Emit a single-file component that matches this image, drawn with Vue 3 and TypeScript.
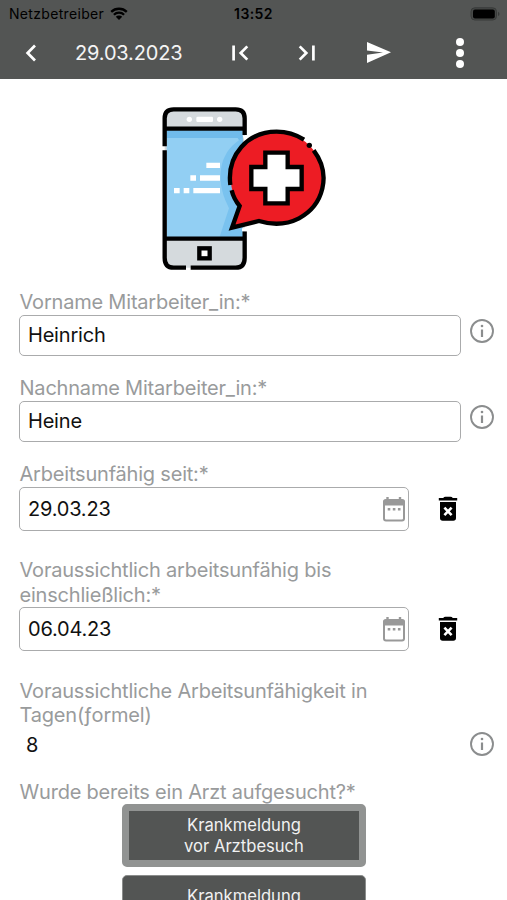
<script setup lang="ts">
import { ref } from 'vue'

interface Field {
  id: string
  label: string[]
  value: string
  kind: 'text' | 'date' | 'formula'
}

const fields = ref<Field[]>([
  { id: 'vorname', label: ['Vorname Mitarbeiter_in:*'], value: 'Heinrich', kind: 'text' },
  { id: 'nachname', label: ['Nachname Mitarbeiter_in:*'], value: 'Heine', kind: 'text' },
  { id: 'seit', label: ['Arbeitsunfähig seit:*'], value: '29.03.23', kind: 'date' },
  { id: 'bis', label: ['Voraussichtlich arbeitsunfähig bis', 'einschließlich:*'], value: '06.04.23', kind: 'date' },
  { id: 'tage', label: ['Voraussichtliche Arbeitsunfähigkeit in', 'Tagen(ƒormel)'], value: '8', kind: 'formula' },
])

const options = [['Krankmeldung', 'vor Arztbesuch'], ['Krankmeldung']]
const selected = ref(0)
</script>

<template>
  <div class="screen">
    <header class="header">
      <div class="status">
        <div class="carrier">
          <span>Netzbetreiber</span>
          <svg class="wifi" viewBox="0 0 18 14">
            <path d="M1.2 4.9a11.2 11.2 0 0 1 15.6 0M3.9 7.8a7.3 7.3 0 0 1 10.2 0" fill="none" stroke="#000" stroke-width="2.3" />
            <path d="M5.8 9.8a4.6 4.6 0 0 1 6.4 0L9 13z" />
          </svg>
        </div>
        <span class="clock">13:52</span>
        <svg class="battery" viewBox="0 0 30 14">
          <rect x="1" y=".8" width="25.5" height="12.2" rx="3.8" fill="#464847" stroke="#383a39" />
          <rect x="3" y="2.6" width="21.8" height="8.8" rx="2" />
          <path d="M28 4.8q1.5.8 1.5 2.1T28 9z" fill="#383a39" />
        </svg>
      </div>
      <nav class="toolbar">
        <button class="tool back" aria-label="Zurück">
          <svg viewBox="0 0 12 18"><path d="M10 1.5 2.6 9l7.4 7.5" /></svg>
        </button>
        <span class="today">29.03.2023</span>
        <button class="tool first" aria-label="Erster">
          <svg viewBox="0 0 17 16"><path d="M1.6.5v15M15.3 1.4 8.7 8l6.6 6.6" /></svg>
        </button>
        <button class="tool last" aria-label="Letzter">
          <svg viewBox="0 0 17 16"><path d="M15.4.5v15M1.7 1.4 8.3 8l-6.6 6.6" /></svg>
        </button>
        <button class="tool send" aria-label="Senden">
          <svg viewBox="0 0 24 21"><path d="M0 0 24 10.3 0 21v-8.2l16-2.3L0 8.4z" /></svg>
        </button>
        <button class="tool more" aria-label="Mehr">
          <svg viewBox="0 0 8 30"><circle cx="4" cy="4" r="4" /><circle cx="4" cy="15" r="4" /><circle cx="4" cy="26" r="4" /></svg>
        </button>
      </nav>
    </header>

    <main class="content">
      <svg class="hero" viewBox="0 0 570 540">
        <rect x="44" y="34" width="240" height="475" rx="26" fill="#d5dadd" />
        <rect x="50" y="92" width="228" height="330" fill="#92cff3" />
        <path d="M50 98h228v45l-15-23H50z" fill="#70bbeb" />
        <path d="M278 120C215 155 195 225 226 307L237 331 209 416h69z" fill="#79c2ef" />
        <g fill="#fff">
          <circle cx="118" cy="64" r="8" />
          <rect x="139" y="56" width="50" height="16" rx="4" />
          <circle cx="209" cy="64" r="8" />
          <path d="M169 194h41v16h-41zM121 232h17v16h-17zM150 232h60v16h-60zM72 270h17v16H72zM101 270h17v16h-17zM130 270h80v16h-80z" />
        </g>
        <g fill="none" stroke="#000" stroke-width="13">
          <path d="M44 145V61q0-27 27-27h186q27 0 27 27v50M44 157v322q0 30 27 30h37M122 509h135q27 0 27-30v-79M44 92h240M44 422h240" />
          <rect x="148" y="451" width="31" height="30" fill="#fff" />
        </g>
        <path d="M278 112 292 116 286 135zM276 391h15v9h-15z" fill="#fff" />
        <circle cx="380" cy="239" r="138" fill="#ed1c24" />
        <path d="M245 275q8 28 23 49l-24 66 84-20 50-70-60-70z" fill="#ed1c24" />
        <g fill="none" stroke="#000" stroke-width="13">
          <path d="M241 261C230 170 294 101 380 101q44 0 82 24M491 157C546 230 520 322 447 361Q392 389 327 369L246 389 269 324Q251 303 245 277" />
          <path d="M346 164h67v43h42v66h-42v43h-67v-43h-42v-66h42z" fill="#fff" />
        </g>
        <circle cx="478" cy="142" r="8" />
      </svg>

      <section v-for="field in fields" :key="field.id" class="field" :class="field.kind">
        <label class="label" :for="field.id">
          <span v-for="line in field.label" :key="line">{{ line }}</span>
        </label>
        <div class="row">
          <div class="control">
            <span :id="field.id" class="value">{{ field.value }}</span>
            <svg v-if="field.kind === 'date'" class="calendar" viewBox="0 0 24 26">
              <path d="M5.5 1v5M18 1v5" stroke="#999" stroke-width="2.4" />
              <rect x="2" y="4.5" width="20" height="20" rx="2" fill="#fff" stroke="#999" stroke-width="2" />
              <path d="M1 9.5V6q0-3 3-3h16q3 0 3 3v3.5z" fill="#999" />
              <path d="M5.7 12h2.6v2.4H5.7zM10.8 12h2.6v2.4h-2.6zM15.9 12h2.6v2.4h-2.6z" fill="#999" />
            </svg>
          </div>
          <button v-if="field.kind === 'date'" class="trash" aria-label="Löschen">
            <svg viewBox="0 0 20 26">
              <path d="M.8 2h4.4Q6 .8 7.5.8h5q1.5 0 2.3 1.200h4.400v2.600H.8zM2 6h16v16q0 2.700-2.700 2.700H4.700Q2 24.700 2 22z" />
              <path d="m6.400 11.600 7.200 7.600M13.600 11.600l-7.200 7.600" stroke="#fff" stroke-width="2.6" />
            </svg>
          </button>
          <button v-else class="info" aria-label="Info">
            <svg viewBox="0 0 26 26">
              <circle cx="13" cy="13" r="11" fill="none" stroke="#8b8d8e" stroke-width="1.9" />
              <path d="M13 11.500v7.500" stroke="#8b8d8e" stroke-width="2.2" />
              <circle cx="13" cy="8" r="1.3" fill="#8b8d8e" />
            </svg>
          </button>
        </div>
      </section>

      <section class="choice">
        <span class="label">Wurde bereits ein Arzt aufgesucht?*</span>
        <div class="options">
          <button
            v-for="(option, i) in options"
            :key="i"
            class="option"
            :class="{ active: selected === i }"
            @click="selected = i"
          >
            <span v-for="line in option" :key="line">{{ line }}</span>
          </button>
        </div>
      </section>
    </main>
  </div>
</template>

<style>
body {
  background: #fff;
}
</style>

<style scoped>
.screen {
  width: 507px;
  height: 900px;
  overflow: hidden;
  box-sizing: border-box;
  font-family: Inter, "Liberation Sans", sans-serif;
  color: #111;
  background: #fff;
}
.screen svg {
  display: block;
}
button {
  border: 0;
  padding: 0;
  background: none;
  font: inherit;
}
.header {
  height: 79px;
  background: #535554;
}
.status {
  display: grid;
  grid-template-columns: 1fr auto 1fr;
  align-items: center;
  height: 27px;
  padding: 0 7px 0 9px;
  font-size: 14px;
  color: #000;
}
.carrier {
  display: flex;
  align-items: center;
  gap: 6px;
  letter-spacing: 0.32px;
}
.wifi {
  width: 18px;
  height: 14px;
}
.clock {
  margin-right: 2px;
  font-weight: 600;
  letter-spacing: 0.4px;
}
.battery {
  justify-self: end;
  width: 30px;
  height: 14px;
}
.toolbar {
  display: flex;
  align-items: center;
  height: 51px;
  color: #f4f4f4;
}
.tool svg {
  fill: none;
  stroke: #fff;
  stroke-width: 2.7;
}
.back {
  margin-left: 24.5px;
}
.back svg {
  width: 12px;
  height: 18px;
}
.today {
  width: 116px;
  margin-left: 38.5px;
  font-size: 20px;
  letter-spacing: -0.15px;
  white-space: nowrap;
}
.first {
  margin-left: 41px;
}
.last {
  margin-left: 49px;
}
.first svg,
.last svg {
  width: 17px;
  height: 16px;
}
.send {
  margin-left: 52px;
}
.send svg {
  width: 24px;
  height: 21px;
  fill: #fff;
  stroke: none;
}
.more {
  margin-left: 65px;
}
.more svg {
  width: 8px;
  height: 30px;
  fill: #fff;
  stroke: none;
}
.content {
  display: flex;
  flex-direction: column;
  padding: 19px 0 0 19px;
}
.hero {
  width: 190px;
  height: 180px;
  margin: 0 0 12.2px 131px;
}
.label {
  display: flex;
  flex-direction: column;
  margin-left: 0.5px;
  font-size: 20px;
  line-height: 24.4px;
  letter-spacing: -0.2px;
  color: #999b9c;
  white-space: nowrap;
}
.field {
  margin-bottom: 20px;
}
.row {
  display: flex;
  align-items: center;
}
.control {
  display: flex;
  align-items: center;
  justify-content: space-between;
  box-sizing: border-box;
  width: 442px;
  height: 41.6px;
  padding: 0 2px 0 8px;
  border: 1px solid #aaabac;
  border-radius: 5px;
}
.value {
  font-size: 20px;
  letter-spacing: -0.2px;
}
.field.date .control {
  width: 390px;
  height: 44px;
}
.field.date {
  margin-bottom: 27.7px;
}
.calendar {
  width: 24px;
  height: 26px;
}
.trash {
  margin-left: 29px;
}
.trash svg {
  width: 20px;
  height: 26px;
}
.info {
  margin: -9px 0 0 8px;
}
.info svg {
  width: 26px;
  height: 26px;
}
.field.formula {
  margin-bottom: 17px;
}
.formula .row {
  height: 35px;
}
.formula .control {
  height: 35px;
  border-color: transparent;
  padding-left: 6px;
}
.formula .info {
  margin-top: -2px;
}
.options {
  display: flex;
  flex-direction: column;
  gap: 8px;
  width: 244px;
  margin-left: 103px;
}
.option {
  display: flex;
  flex-direction: column;
  align-items: center;
  justify-content: flex-start;
  box-sizing: border-box;
  height: 63px;
  padding-top: 10px;
  border: 1px solid #8b8d8c;
  border-radius: 5px;
  background: #535554;
  color: #f1f1f1;
  font-size: 16.6px;
  line-height: 20.5px;
}
.option.active {
  padding-top: 4px;
  border: 7px solid #919392;
}
</style>
